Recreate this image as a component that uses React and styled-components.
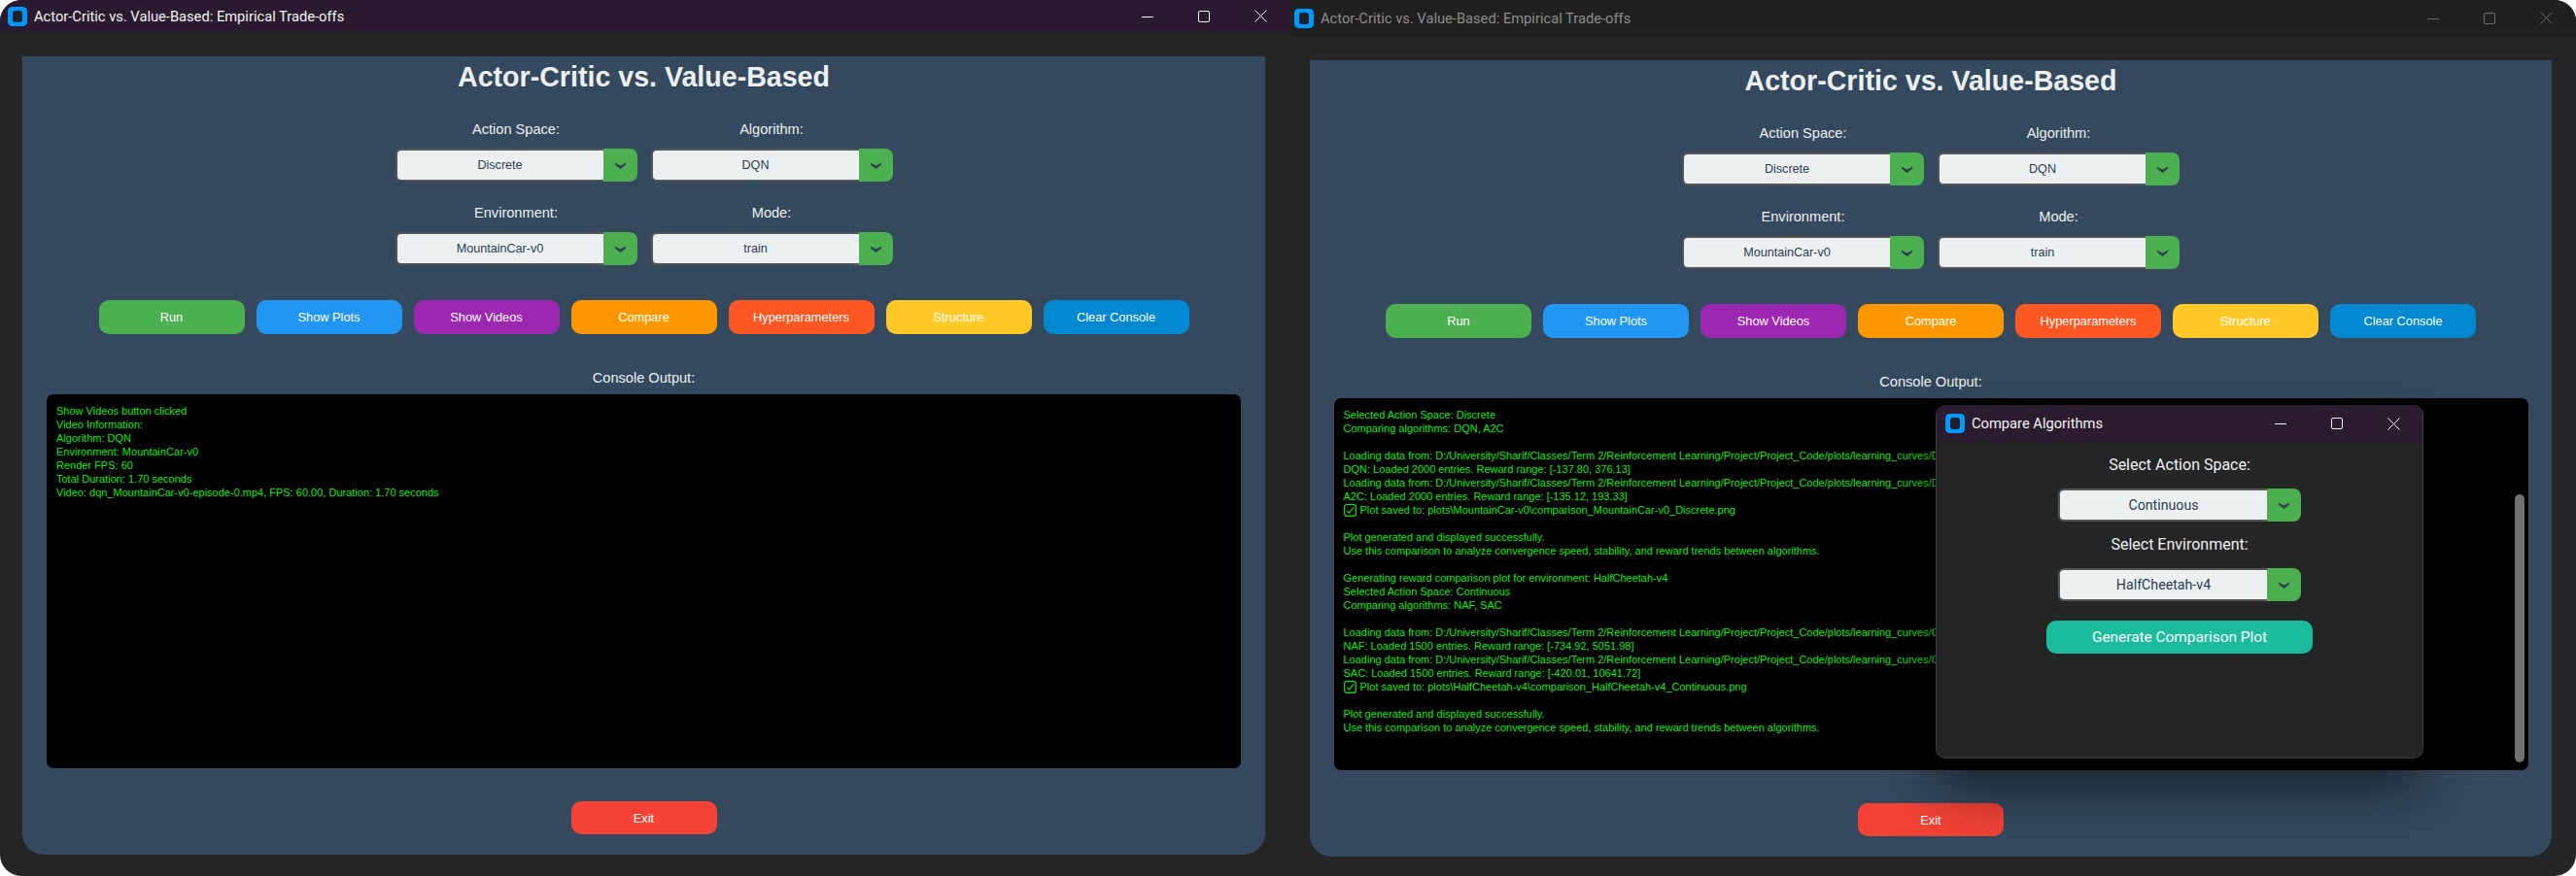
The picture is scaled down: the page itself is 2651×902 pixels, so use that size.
import React from 'react';
import styled, { createGlobalStyle } from 'styled-components';

const Global = createGlobalStyle`
    html, body {
        margin: 0;
        padding: 0;
        background: #fff;
    }
    * {
        box-sizing: border-box;
    }
`;

const Desktop = styled.div`
    display: flex;
    width: 2651px;
    height: 902px;
    overflow: hidden;
    position: relative;
    font-family: "Liberation Sans", Arial, sans-serif;
`;

const Window = styled.div`
    display: flex;
    flex-direction: column;
    width: ${(props) => props.$width}px;
    height: 902px;
    background: #252525;
    overflow: hidden;
    border-radius: ${(props) => props.$radius};
`;

const TitleBar = styled.div`
    display: flex;
    align-items: center;
    flex: none;
    height: ${(props) => props.$height}px;
    padding-left: ${(props) => props.$iconLeft}px;
    background: ${(props) => props.$bg};
    color: ${(props) => props.$color};
    font-family: Roboto, sans-serif;
    font-size: 14.7px;
`;

const TitleText = styled.span`
    margin-left: 7px;
    flex: 1;
    white-space: nowrap;
`;

const WinControls = styled.div`
    display: flex;
    align-items: center;
    gap: ${(props) => props.$gap}px;
    padding-right: ${(props) => props.$right}px;
`;

const Body = styled.div`
    flex: 1;
    display: flex;
    min-height: 0;
    padding: 25px ${(props) => props.$right}px ${(props) => props.$bottom}px ${(props) => props.$left}px;
`;

const Panel = styled.div`
    flex: 1;
    display: flex;
    flex-direction: column;
    align-items: center;
    background: #34495e;
    border-radius: 0 0 22px 22px;
`;

const Heading = styled.h1`
    margin: 0 0 21px;
    height: 42px;
    line-height: 42px;
    font-size: 28.6px;
    font-weight: 700;
    color: #ecf0f1;
`;

const Selectors = styled.div`
    display: grid;
    grid-template-columns: 249px 249px;
    column-gap: 14px;
    row-gap: 20px;
`;

const Field = styled.div`
    display: flex;
    flex-direction: column;
    align-items: center;
    gap: 8px;
`;

const FieldLabel = styled.label`
    height: 24px;
    line-height: 24px;
    font-size: 14.6px;
    color: #ecf0f1;
`;

const Combo = styled.div`
    display: flex;
    width: ${(props) => props.$width || 249}px;
    height: 34px;
    font-family: ${(props) => (props.$roboto ? 'Roboto, sans-serif' : 'inherit')};
    font-size: ${(props) => (props.$roboto ? '14.2px' : '12.6px')};
    color: #2c3e50;
`;

const ComboValue = styled.div`
    flex: 1;
    display: flex;
    align-items: center;
    justify-content: center;
    background: #ecf0f1;
    border: 2px solid #555;
    border-right: none;
    border-radius: 6px 0 0 6px;
`;

const ComboArrow = styled.div`
    flex: none;
    width: 35px;
    display: flex;
    align-items: center;
    justify-content: center;
    background: #4caf50;
    border-radius: 0 8px 8px 0;
`;

const ButtonRow = styled.div`
    display: flex;
    gap: 12px;
    margin-top: 36px;
`;

const ActionButton = styled.button`
    width: 150px;
    height: ${(props) => props.$height || 35}px;
    padding: 0;
    border: none;
    border-radius: 10px;
    background: ${(props) => props.$bg};
    color: #fff;
    font-family: "Liberation Sans", Arial, sans-serif;
    font-size: 12.8px;
`;

const ConsoleTitle = styled.div`
    margin-top: 35px;
    height: 20px;
    line-height: 20px;
    font-size: 14.6px;
    color: #ecf0f1;
`;

const ConsoleBox = styled.div`
    position: relative;
    flex: 1;
    min-height: 0;
    width: 1229px;
    margin-top: 7px;
    padding: 10px;
    background: #000;
    border-radius: 7px;
    overflow: hidden;
    color: #00ee00;
    font-size: 11px;
    line-height: 14px;
`;

const ConsoleLine = styled.div`
    display: flex;
    align-items: center;
    height: 14px;
    white-space: nowrap;
`;

const SavedMark = styled.svg`
    flex: none;
    margin-right: 4px;
`;

const Scrollbar = styled.div`
    position: absolute;
    top: 99px;
    bottom: 8px;
    right: 4px;
    width: 10px;
    border-radius: 5px;
    background: #6f6f6f;
`;

const ExitWrap = styled.div`
    margin: 34px 0 21px;
`;

const Dialog = styled.div`
    position: absolute;
    left: 1992px;
    top: 417px;
    width: 502px;
    height: 364px;
    display: flex;
    flex-direction: column;
    background: #252525;
    border: 1px solid #3a3a3a;
    border-top: none;
    border-radius: 10px;
    box-shadow: 0 30px 60px rgba(0, 0, 0, 0.55);
    overflow: hidden;
    font-family: Roboto, sans-serif;
`;

const DialogBody = styled.div`
    display: flex;
    flex-direction: column;
    align-items: center;
    padding-top: 12px;
`;

const DialogLabel = styled.div`
    height: 24px;
    line-height: 24px;
    font-size: 16px;
    color: #ecf0f1;
    margin-top: ${(props) => props.$before || 0}px;
    margin-bottom: 12px;
`;

const GenerateButton = styled.button`
    width: 274px;
    height: 34px;
    margin-top: 20px;
    padding: 0;
    border: none;
    border-radius: 10px;
    background: #1abc9c;
    color: #fff;
    font-family: Roboto, sans-serif;
    font-size: 15.4px;
`;

const AppIcon = () => (
    <svg width="20" height="20" viewBox="0 0 20 20">
        <rect x="0" y="0" width="20" height="20" rx="4.5" fill="#0097fb" />
        <rect x="5" y="4" width="10" height="12" rx="3" fill="#1d1f2b" />
    </svg>
);

const MinIcon = ({ color }) => (
    <svg width="12" height="12" viewBox="0 0 12 12">
        <path d="M0 6.5H12" stroke={color} strokeWidth="1" />
    </svg>
);

const MaxIcon = ({ color }) => (
    <svg width="12" height="12" viewBox="0 0 12 12">
        <rect x="0.5" y="0.5" width="11" height="11" rx="1.5" fill="none" stroke={color} strokeWidth="1" />
    </svg>
);

const CloseIcon = ({ color }) => (
    <svg width="13" height="13" viewBox="0 0 13 13">
        <path d="M0.5 0.5L12.5 12.5M12.5 0.5L0.5 12.5" stroke={color} strokeWidth="1" />
    </svg>
);

const Chevron = () => (
    <svg width="13" height="7" viewBox="0 0 13 7">
        <path d="M0.5 0.4L6.5 3.6L12.5 0.4L11.6 3L6.5 6.9L1.4 3Z" fill="#2c3e50" />
    </svg>
);

const CheckBoxIcon = () => (
    <SavedMark width="13" height="13" viewBox="0 0 13 13">
        <rect x="0.7" y="0.7" width="11.6" height="11.6" rx="2" fill="none" stroke="#00ee00" strokeWidth="1.2" />
        <path d="M3.2 6.8L5.5 9.2L9.8 3.6" fill="none" stroke="#00ee00" strokeWidth="1.2" />
    </SavedMark>
);

const buttons = [
    ['Run', '#4caf50'],
    ['Show Plots', '#2196f3'],
    ['Show Videos', '#9c27b0'],
    ['Compare', '#ff9800'],
    ['Hyperparameters', '#ff5722'],
    ['Structure', '#ffca28'],
    ['Clear Console', '#0288d1'],
];

const dataPath = 'D:/University/Sharif/Classes/Term 2/Reinforcement Learning/Project/Project_Code/plots/learning_curves/';

const leftLog = [
    'Show Videos button clicked',
    'Video Information:',
    'Algorithm: DQN',
    'Environment: MountainCar-v0',
    'Render FPS: 60',
    'Total Duration: 1.70 seconds',
    'Video: dqn_MountainCar-v0-episode-0.mp4, FPS: 60.00, Duration: 1.70 seconds',
];

const rightLog = [
    'Selected Action Space: Discrete',
    'Comparing algorithms: DQN, A2C',
    '',
    `Loading data from: ${dataPath}Discrete`,
    'DQN: Loaded 2000 entries. Reward range: [-137.80, 376.13]',
    `Loading data from: ${dataPath}Discrete`,
    'A2C: Loaded 2000 entries. Reward range: [-135.12, 193.33]',
    { saved: 'Plot saved to: plots\\MountainCar-v0\\comparison_MountainCar-v0_Discrete.png' },
    '',
    'Plot generated and displayed successfully.',
    'Use this comparison to analyze convergence speed, stability, and reward trends between algorithms.',
    '',
    'Generating reward comparison plot for environment: HalfCheetah-v4',
    'Selected Action Space: Continuous',
    'Comparing algorithms: NAF, SAC',
    '',
    `Loading data from: ${dataPath}Continuous`,
    'NAF: Loaded 1500 entries. Reward range: [-734.92, 5051.98]',
    `Loading data from: ${dataPath}Continuous`,
    'SAC: Loaded 1500 entries. Reward range: [-420.01, 10641.72]',
    { saved: 'Plot saved to: plots\\HalfCheetah-v4\\comparison_HalfCheetah-v4_Continuous.png' },
    '',
    'Plot generated and displayed successfully.',
    'Use this comparison to analyze convergence speed, stability, and reward trends between algorithms.',
];

function Select({ value, width, roboto }) {
    return (
        <Combo $width={width} $roboto={roboto}>
            <ComboValue>{value}</ComboValue>
            <ComboArrow><Chevron /></ComboArrow>
        </Combo>
    );
}

function Controls({ color, gap, right }) {
    return (
        <WinControls $gap={gap} $right={right}>
            <MinIcon color={color} />
            <MaxIcon color={color} />
            <CloseIcon color={color} />
        </WinControls>
    );
}

function AppPanel({ log, scrollbar }) {
    return (
        <Panel>
            <Heading>Actor-Critic vs. Value-Based</Heading>
            <Selectors>
                <Field><FieldLabel>Action Space:</FieldLabel><Select value="Discrete" /></Field>
                <Field><FieldLabel>Algorithm:</FieldLabel><Select value="DQN" /></Field>
                <Field><FieldLabel>Environment:</FieldLabel><Select value="MountainCar-v0" /></Field>
                <Field><FieldLabel>Mode:</FieldLabel><Select value="train" /></Field>
            </Selectors>
            <ButtonRow>
                {buttons.map(([label, bg]) => (
                    <ActionButton key={label} $bg={bg}>{label}</ActionButton>
                ))}
            </ButtonRow>
            <ConsoleTitle>Console Output:</ConsoleTitle>
            <ConsoleBox>
                {log.map((line, i) => (
                    <ConsoleLine key={i}>
                        {line.saved ? <><CheckBoxIcon />{line.saved}</> : line}
                    </ConsoleLine>
                ))}
                {scrollbar && <Scrollbar />}
            </ConsoleBox>
            <ExitWrap>
                <ActionButton $bg="#f44336" $height={34}>Exit</ActionButton>
            </ExitWrap>
        </Panel>
    );
}

export default function App() {
    return (
        <Desktop>
            <Global />
            <Window $width={1328} $radius="22px 0 0 22px">
                <TitleBar $height={33} $iconLeft={8} $bg="#291a2f" $color="#f2f2f2">
                    <AppIcon />
                    <TitleText>Actor-Critic vs. Value-Based: Empirical Trade-offs</TitleText>
                    <Controls color="#f2f2f2" gap={46} right={24} />
                </TitleBar>
                <Body $left={23} $right={26} $bottom={22}>
                    <AppPanel log={leftLog} />
                </Body>
            </Window>
            <Window $width={1323} $radius="0 22px 22px 0">
                <TitleBar $height={37} $iconLeft={4} $bg="#1f1f1f" $color="#8c8c8c">
                    <AppIcon />
                    <TitleText>Actor-Critic vs. Value-Based: Empirical Trade-offs</TitleText>
                    <Controls color="#6e6e6e" gap={46} right={24} />
                </TitleBar>
                <Body $left={20} $right={25} $bottom={20}>
                    <AppPanel log={rightLog} scrollbar />
                </Body>
            </Window>
            <Dialog>
                <TitleBar $height={38} $iconLeft={9} $bg="#2a1c2e" $color="#f2f2f2">
                    <AppIcon />
                    <TitleText>Compare Algorithms</TitleText>
                    <Controls color="#f2f2f2" gap={46} right={23} />
                </TitleBar>
                <DialogBody>
                    <DialogLabel>Select Action Space:</DialogLabel>
                    <Select value="Continuous" width={250} roboto />
                    <DialogLabel $before={12}>Select Environment:</DialogLabel>
                    <Select value="HalfCheetah-v4" width={250} roboto />
                    <GenerateButton>Generate Comparison Plot</GenerateButton>
                </DialogBody>
            </Dialog>
        </Desktop>
    );
}
